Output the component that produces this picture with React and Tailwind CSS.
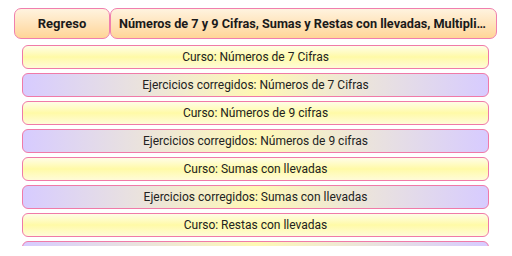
const rows = [
  { label: 'Curso: Números de 7 Cifras', kind: 'curso' },
  { label: 'Ejercicios corregidos: Números de 7 Cifras', kind: 'ejercicios' },
  { label: 'Curso: Números de 9 cifras', kind: 'curso' },
  { label: 'Ejercicios corregidos: Números de 9 cifras', kind: 'ejercicios' },
  { label: 'Curso: Sumas con llevadas', kind: 'curso' },
  { label: 'Ejercicios corregidos: Sumas con llevadas', kind: 'ejercicios' },
  { label: 'Curso: Restas con llevadas', kind: 'curso' },
  { label: 'Ejercicios corregidos: Restas con llevadas', kind: 'ejercicios' },
];

const headerBtn =
  'h-[31px] rounded-[7px] border border-[#f07fae] bg-gradient-to-b from-[#fff3df] to-[#ffd597] flex items-center text-[#1a1a1a] font-bold';

const App = () => {
  return (
    <div
      className="w-[512px] h-[256px] overflow-hidden bg-white"
      style={{ fontFamily: 'Roboto, "Noto Sans", sans-serif' }}
    >
      {/* header */}
      <div className="flex pt-[8px] pl-[14px] pr-[15px]">
        <button className={`${headerBtn} w-[96px] shrink-0 justify-center text-[13px]`}>Regreso</button>
        <button className={`${headerBtn} flex-1 min-w-0 pl-[8px] pr-[6px] text-[12.7px]`}>
          <span className="truncate">
            Números de 7 y 9 Cifras, Sumas y Restas con llevadas, Multipli…
          </span>
        </button>
      </div>

      {/* course list, clipped like a scroll view */}
      <div className="flex flex-col gap-[4px] mt-[6px] pl-[22px] pr-[23px] h-[201px] overflow-hidden">
        {rows.map((row) => (
          <div
            key={row.label}
            className={
              row.kind === 'curso'
                ? 'h-[24px] shrink-0 rounded-[6px] border-[1.5px] border-[#f07aa8] bg-gradient-to-b from-[#fffde6] via-[#fffaa6] to-[#fffbd8] flex items-center justify-center text-[12px] text-[#222]'
                : 'h-[24px] shrink-0 rounded-[6px] border-[1.5px] border-[#f07aa8] bg-gradient-to-r from-[#d7cbff] via-[#fff8b4] to-[#d7cbff] flex items-center justify-center text-[12px] text-[#222]'
            }
          >
            {row.label}
          </div>
        ))}
      </div>
    </div>
  );
};

export default App;
